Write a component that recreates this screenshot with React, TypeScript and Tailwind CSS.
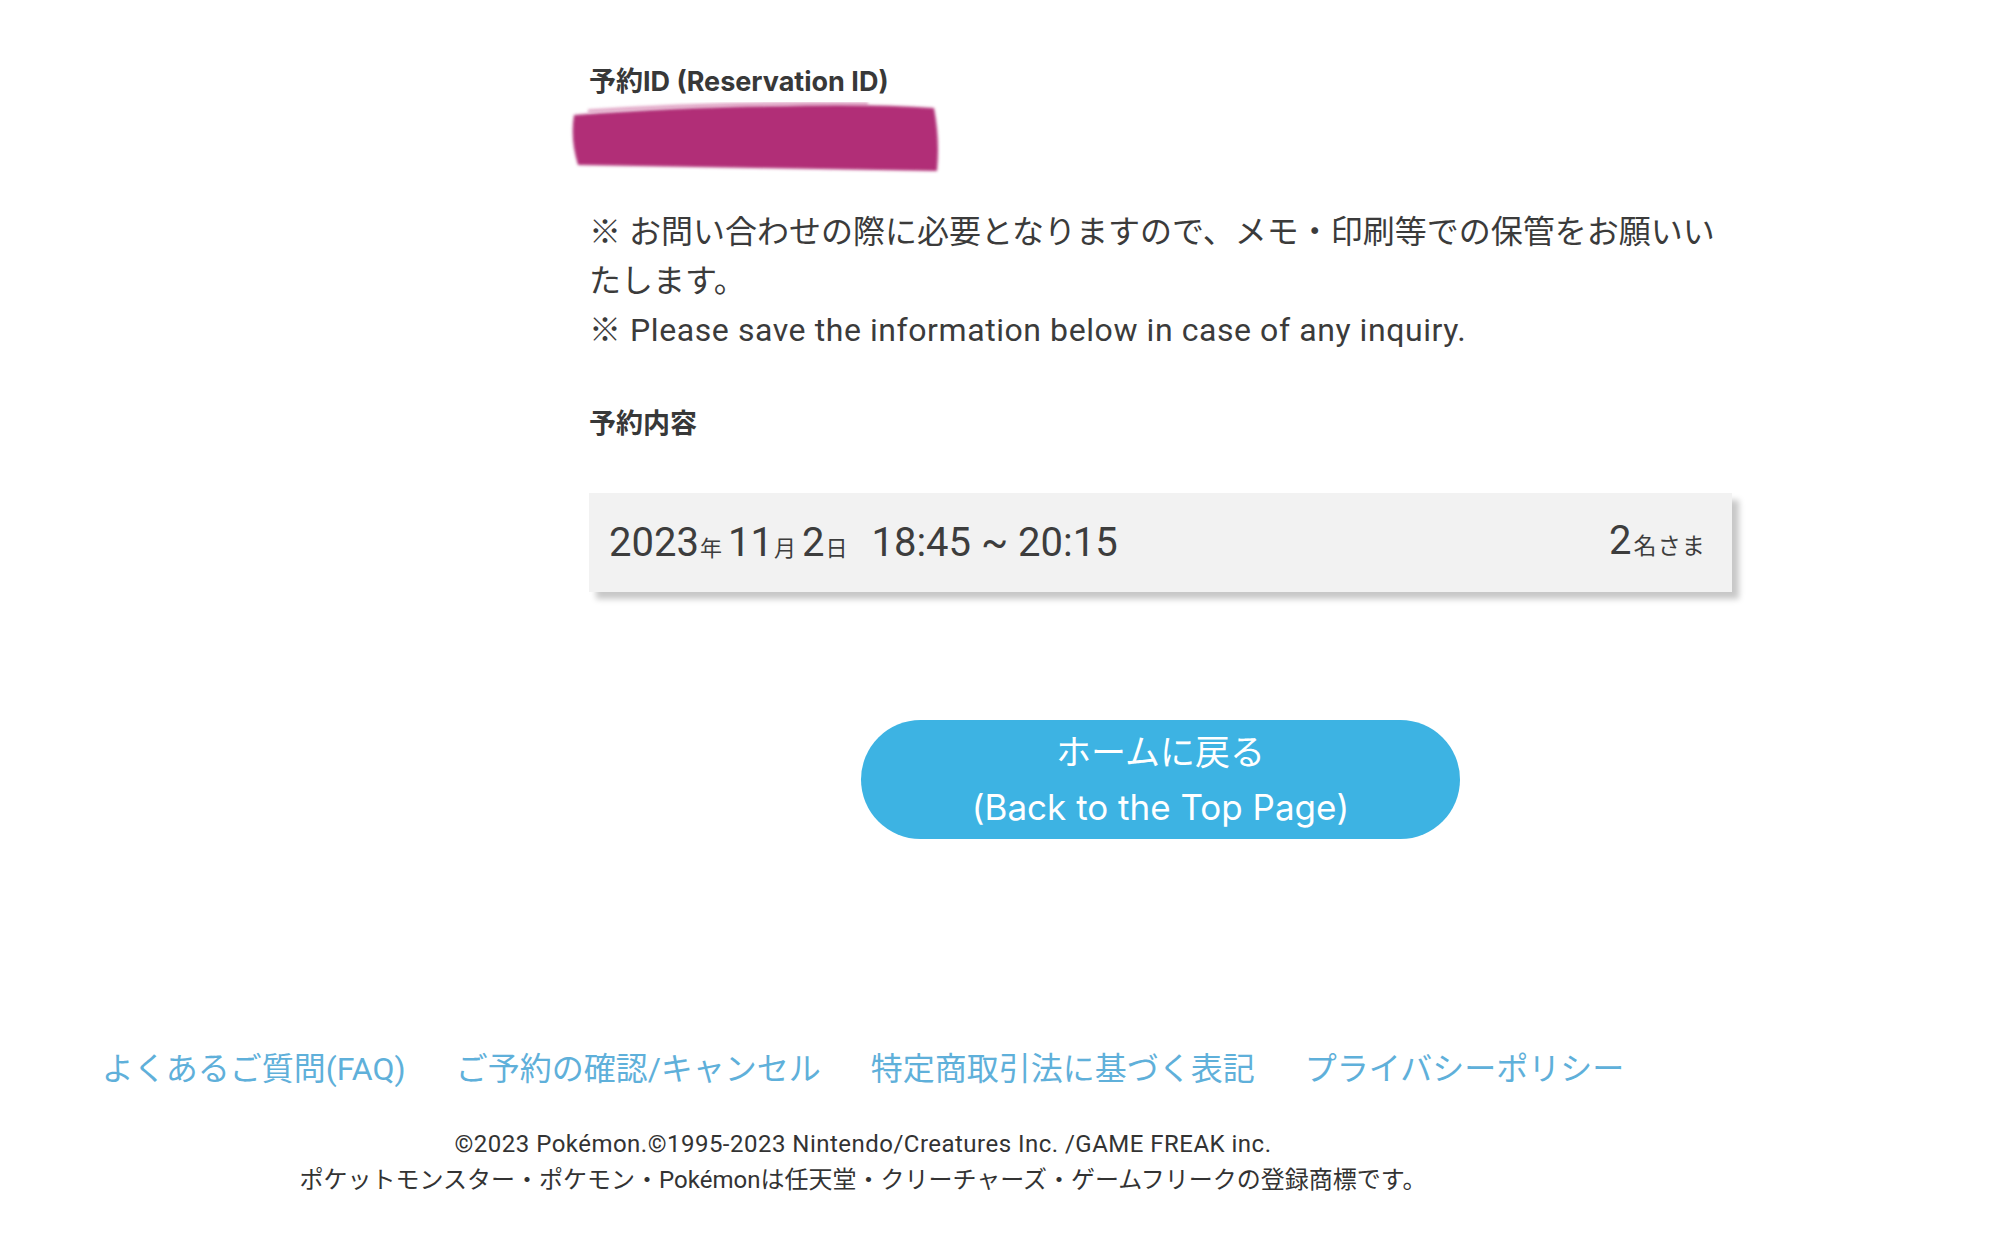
export default function App() {
  const links = [
    'よくあるご質問(FAQ)',
    'ご予約の確認/キャンセル',
    '特定商取引法に基づく表記',
    'プライバシーポリシー',
  ];

  return (
    <div className="min-h-screen bg-white text-[#3b3b3b] font-['Roboto','Noto_Sans_CJK_JP',sans-serif]">
      {/* Main Content */}
      <main className="ml-[589px] w-[1143px] pt-[62px]">
        <h2 className="text-[27px] leading-[39px] font-bold text-[#383838] font-['Inter','Noto_Sans_CJK_JP',sans-serif]">
          予約ID (Reservation ID)
        </h2>

        {/* redacted id */}
        <svg width="380" height="78" viewBox="0 0 380 78" className="-ml-[21px] -mt-[2px] block">
          <defs>
            <filter id="soft" x="-5%" y="-20%" width="110%" height="140%">
              <feGaussianBlur stdDeviation="1.6" />
            </filter>
          </defs>
          <path
            d="M6 16 Q 110 8 200 7 Q 300 4 366 9 Q 372 40 369 72 L 250 70 L 10 66 Q 2 40 6 16 Z"
            fill="#b12f77"
            filter="url(#soft)"
          />
          <path d="M20 12 Q 150 3 300 5" stroke="#c75a95" strokeWidth="3" fill="none" filter="url(#soft)" opacity="0.6" />
        </svg>

        <div className="mt-[31px] text-[32px] leading-[49px]">
          <p>※ お問い合わせの際に必要となりますので、メモ・印刷等での保管をお願いいたします。</p>
          <p className="tracking-[0.018em]">※ Please save the information below in case of any inquiry.</p>
        </div>

        <h3 className="mt-[49px] text-[27px] leading-[39px] font-bold text-[#383838] font-['Inter','Noto_Sans_CJK_JP',sans-serif]">
          予約内容
        </h3>

        {/* Reservation card */}
        <div className="mt-[50px] h-[99px] bg-[#f2f2f2] shadow-[7px_7px_6px_rgba(0,0,0,0.22)] flex items-center justify-between pl-[20px] pr-[26px]">
          <div className="flex items-baseline text-[40px] leading-none text-[#3d3d3d]">
            <span>2023</span>
            <span className="text-[22px] ml-[1px]">年</span>
            <span className="ml-[6px]">11</span>
            <span className="text-[22px] ml-[1px]">月</span>
            <span className="ml-[6px]">2</span>
            <span className="text-[22px] ml-[1px]">日</span>
            <span className="ml-[24px]">18:45 ~ 20:15</span>
          </div>
          <div className="flex items-baseline text-[#3d3d3d]">
            <span className="text-[40px] leading-none">2</span>
            <span className="text-[23px] ml-[2px] tracking-[0.05em]">名さま</span>
          </div>
        </div>

        <div className="flex justify-center mt-[128px]">
          <button className="w-[599px] h-[119px] rounded-full bg-[#3db3e3] text-white text-[35px] leading-[55px] font-['Inter','Noto_Sans_CJK_JP',sans-serif]">
            ホームに戻る
            <br />
            (Back to the Top Page)
          </button>
        </div>
      </main>

      {/* Footer */}
      <footer className="w-[1726px] mt-[206px] pb-[40px]">
        <nav className="flex justify-center gap-[50px] text-[32px] leading-[48px] text-[#5fb0da]">
          {links.map((l) => (
            <a key={l} href="#" className="hover:underline">
              {l}
            </a>
          ))}
        </nav>
        <div className="mt-[33px] text-center text-[24px] leading-[36px] text-[#333]">
          <p className="tracking-[0.02em]">©2023 Pokémon.©1995-2023 Nintendo/Creatures Inc. /GAME FREAK inc.</p>
          <p>ポケットモンスター・ポケモン・Pokémonは任天堂・クリーチャーズ・ゲームフリークの登録商標です。</p>
        </div>
      </footer>
    </div>
  );
}
